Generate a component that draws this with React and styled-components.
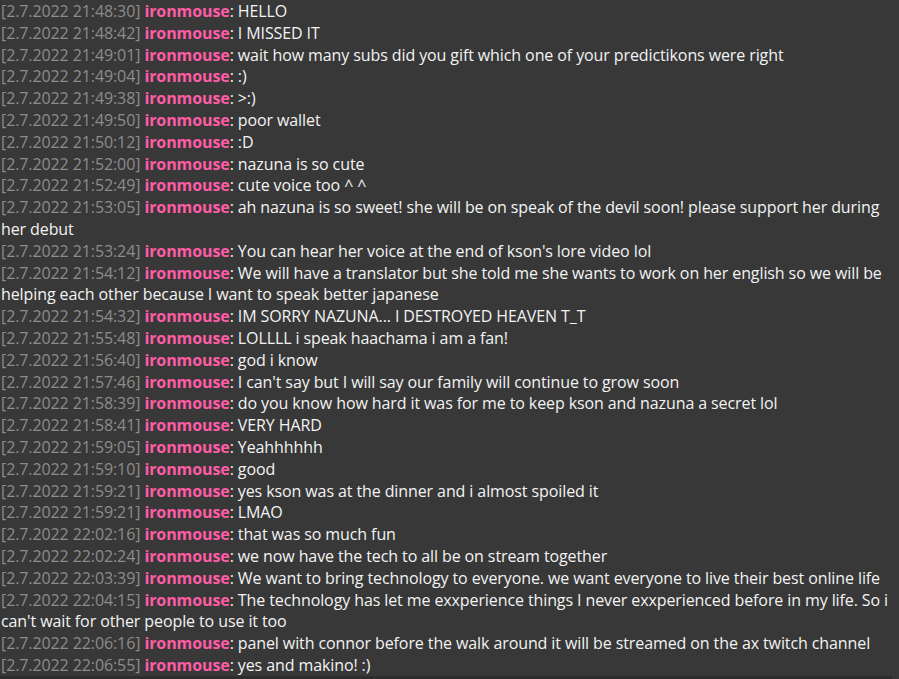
import React from 'react'
import styled, { createGlobalStyle } from 'styled-components'

const messages = [
  ['2.7.2022 21:48:30', 'HELLO'],
  ['2.7.2022 21:48:42', 'I MISSED IT'],
  ['2.7.2022 21:49:01', 'wait how many subs did you gift which one of your predictikons were right'],
  ['2.7.2022 21:49:04', ':)'],
  ['2.7.2022 21:49:38', '>:)'],
  ['2.7.2022 21:49:50', 'poor wallet'],
  ['2.7.2022 21:50:12', ':D'],
  ['2.7.2022 21:52:00', 'nazuna is so cute'],
  ['2.7.2022 21:52:49', 'cute voice too ^ ^'],
  ['2.7.2022 21:53:05', 'ah nazuna is so sweet! she will be on speak of the devil soon! please support her during her debut'],
  ['2.7.2022 21:53:24', "You can hear her voice at the end of kson's lore video lol"],
  ['2.7.2022 21:54:12', 'We will have a translator but she told me she wants to work on her english so we will be helping each other because I want to speak better japanese'],
  ['2.7.2022 21:54:32', 'IM SORRY NAZUNA... I DESTROYED HEAVEN T_T'],
  ['2.7.2022 21:55:48', 'LOLLLL i speak haachama i am a fan!'],
  ['2.7.2022 21:56:40', 'god i know'],
  ['2.7.2022 21:57:46', "I can't say but I will say our family will continue to grow soon"],
  ['2.7.2022 21:58:39', 'do you know how hard it was for me to keep kson and nazuna a secret lol'],
  ['2.7.2022 21:58:41', 'VERY HARD'],
  ['2.7.2022 21:59:05', 'Yeahhhhhh'],
  ['2.7.2022 21:59:10', 'good'],
  ['2.7.2022 21:59:21', 'yes kson was at the dinner and i almost spoiled it'],
  ['2.7.2022 21:59:21', 'LMAO'],
  ['2.7.2022 22:02:16', 'that was so much fun'],
  ['2.7.2022 22:02:24', 'we now have the tech to all be on stream together'],
  ['2.7.2022 22:03:39', 'We want to bring technology to everyone. we want everyone to live their best online life'],
  ['2.7.2022 22:04:15', "The technology has let me exxperience things I never exxperienced before in my life. So i can't wait for other people to use it too"],
  ['2.7.2022 22:06:16', 'panel with connor before the walk around it will be streamed on the ax twitch channel'],
  ['2.7.2022 22:06:55', 'yes and makino! :)'],
]

const GlobalStyle = createGlobalStyle`
  html, body {
    margin: 0;
    padding: 0;
    background: #383838;
  }
`

export default function App() {
  return (
    <>
      <GlobalStyle />
      <Log>
        {messages.map(([time, text], i) => (
          <Line key={i}>
            <Time>[{time}]</Time> <Author>ironmouse</Author>: {text}
          </Line>
        ))}
      </Log>
      <ScrollTrack />
    </>
  )
}

const Log = styled.div`
  height: 676px;
  overflow: hidden;
  padding: 1px 1px 0 1px;
  box-sizing: border-box;
  background: #383838;
  color: #f3f3f3;
  font-family: 'Open Sans', 'Noto Sans', sans-serif;
  font-size: 16px;
  letter-spacing: -0.1px;
  line-height: 21.8px;
`

const Line = styled.div`
  word-wrap: break-word;
`

const Time = styled.span`
  color: #8c8c8c;
`

const Author = styled.span`
  color: #ff5ca6;
  font-weight: 700;
`

const ScrollTrack = styled.div`
  width: 892px;
  height: 3px;
  background: #2d2d2d;
`
